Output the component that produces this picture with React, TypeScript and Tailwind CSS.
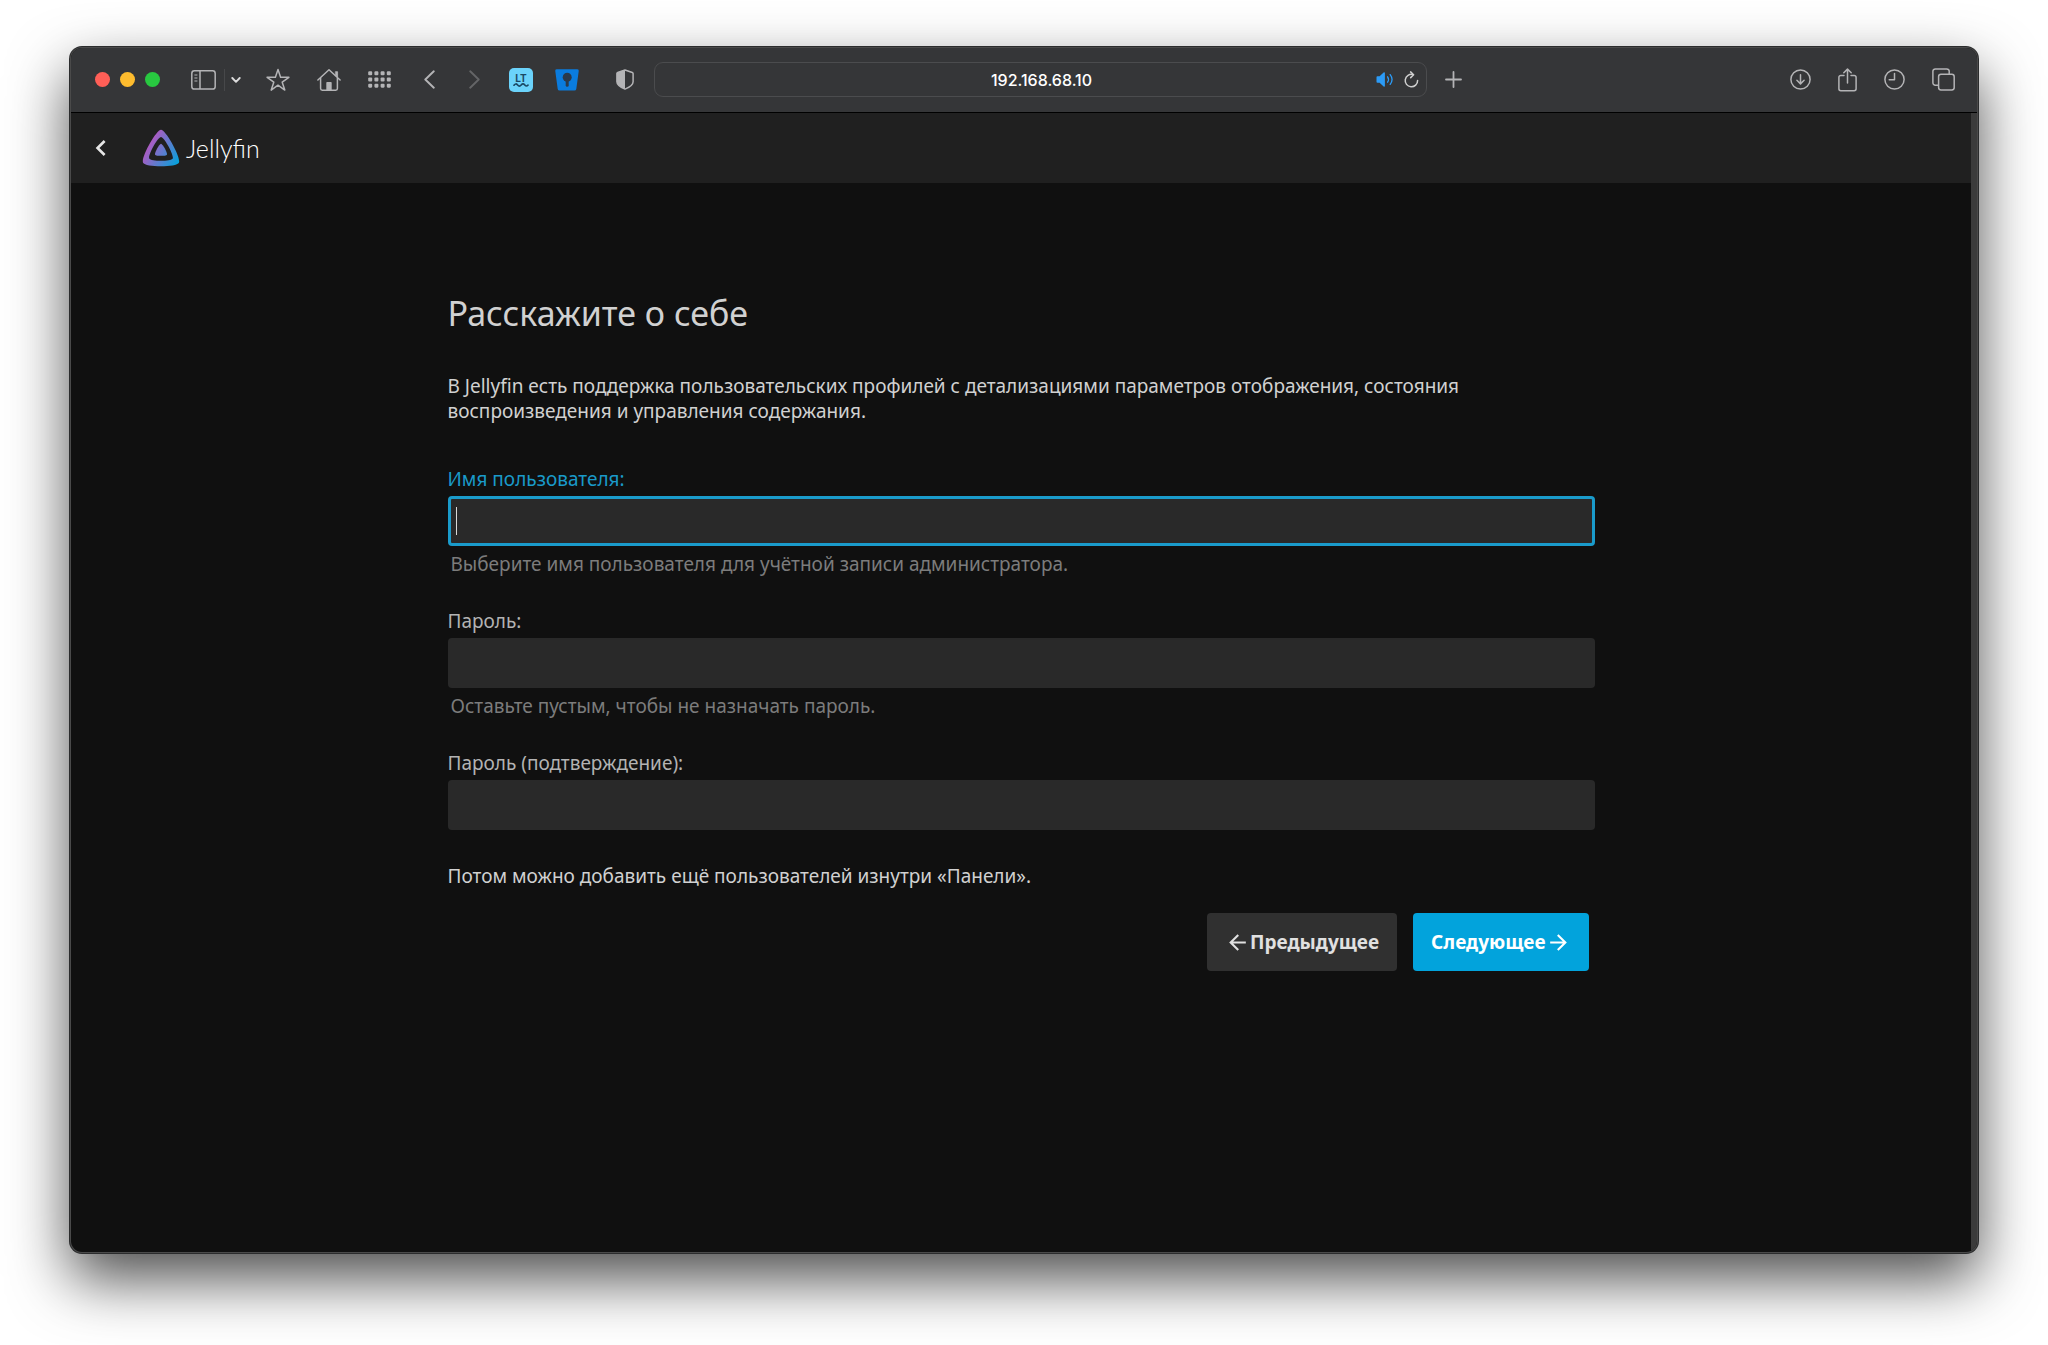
import { useId } from "react"
import { MdArrowBack, MdArrowForward, MdChevronLeft } from "react-icons/md"

const gridRows = [0, 1, 2]
const gridCols = [0, 1, 2, 3]

function BrowserToolbar() {
    return (
        <div className="flex h-[65px] items-center border-b border-black bg-[#353638] pr-[22px] pb-px pl-6 text-[#b4b4b6]">
            <div className="flex gap-[10px]">
                <button type="button" aria-label="Закрыть" className="size-[15px] rounded-full bg-[#ff5f57]" />
                <button type="button" aria-label="Свернуть" className="size-[15px] rounded-full bg-[#febc2e]" />
                <button type="button" aria-label="Развернуть" className="size-[15px] rounded-full bg-[#28c840]" />
            </div>

            <div className="ml-[31px] flex items-center">
                <button type="button" aria-label="Боковая панель">
                    <svg width="25" height="20" viewBox="0 0 25 20" fill="none" stroke="currentColor" strokeWidth="1.5">
                        <rect x="0.8" y="0.8" width="23.4" height="18.2" rx="2.6" />
                        <path d="M9 1v18" />
                        <path d="M3.4 5h3M3.4 8h3M3.4 11h3" strokeWidth="1.2" />
                    </svg>
                </button>
                <span className="ml-2 h-[22px] w-px bg-[#47484a]" />
                <button type="button" aria-label="Группы вкладок" className="ml-[6px] text-[#dcdcdc]">
                    <svg width="10" height="8" viewBox="0 0 10 8" fill="none" stroke="currentColor" strokeWidth="1.9" strokeLinecap="round" strokeLinejoin="round">
                        <path d="M1.3 2L5 5.8 8.7 2" />
                    </svg>
                </button>
            </div>

            <div className="ml-[25px] flex items-center gap-[27px]">
                <button type="button" aria-label="Избранное">
                    <svg width="24" height="24" viewBox="0 0 24 24" fill="none" stroke="currentColor" strokeWidth="1.5" strokeLinejoin="round">
                        <path d="M12 1.400l2.600 7.900h8.300l-6.700 4.900 2.600 7.900-6.800-4.900-6.800 4.900 2.600-7.900L1.100 9.300h8.300z" />
                    </svg>
                </button>
                <button type="button" aria-label="Домой">
                    <svg width="24" height="24" viewBox="0 0 24 24" fill="none" stroke="currentColor" strokeWidth="1.5" strokeLinejoin="round" strokeLinecap="round">
                        <path d="M0.900 12L12 1.700 23.100 12" />
                        <path d="M3.600 10v10.500a1.700 1.700 0 0 0 1.700 1.700h13.400a1.700 1.700 0 0 0 1.700-1.700V10" />
                        <path d="M18.700 3.700h1.900v5.200l-1.900-1.800z" fill="currentColor" strokeWidth="0.800" />
                        <path d="M9.300 22v-7.300a.8.8 0 0 1 .8-.8h3.800a.8.8 0 0 1 .8.8V22z" fill="currentColor" stroke="none" />
                    </svg>
                </button>
                <button type="button" aria-label="Все вкладки">
                    <svg width="23" height="17" viewBox="0 0 23 17" fill="currentColor">
                        {gridRows.map((r) =>
                            gridCols.map((c) => <rect key={`${r}-${c}`} x={c * 6.2 + 0.2} y={r * 6.2 + 0.3} width="4" height="4" rx="1.1" />)
                        )}
                    </svg>
                </button>
            </div>

            <button type="button" aria-label="Назад" className="ml-[33px]">
                <svg width="11" height="19" viewBox="0 0 11 19" fill="none" stroke="currentColor" strokeWidth="1.9" strokeLinecap="round" strokeLinejoin="round">
                    <path d="M9.800 1.300L1.300 9.500l8.500 8.200" />
                </svg>
            </button>
            <button type="button" aria-label="Вперёд" className="ml-[34px] text-[#646567]">
                <svg width="11" height="19" viewBox="0 0 11 19" fill="none" stroke="currentColor" strokeWidth="1.9" strokeLinecap="round" strokeLinejoin="round">
                    <path d="M1.200 1.300l8.500 8.200-8.500 8.200" />
                </svg>
            </button>

            <button type="button" aria-label="LanguageTool" className="ml-[29px]">
                <svg width="24" height="24" viewBox="0 0 24 24">
                    <rect width="24" height="24" rx="5" fill="#6bd3fb" />
                    <text x="12" y="13.5" textAnchor="middle" fontSize="10" fontWeight="700" fontFamily="Inter, sans-serif" fill="#1b4a66">LT</text>
                    <path d="M5 17.200c1.200-1.600 2.400-1.600 3.600-.2s2.400 1.400 3.600 0 2.400-1.400 3.600 0 2.200 1.200 3.200.2" fill="none" stroke="#1b4a66" strokeWidth="1.7" strokeLinecap="round" />
                </svg>
            </button>
            <button type="button" aria-label="Bitwarden" className="ml-[22px]">
                <svg width="24" height="24" viewBox="0 0 24 24">
                    <path d="M2 1.200h20a1.700 1.700 0 0 1 1.700 2l-2.400 17.700a2 2 0 0 1-2 1.700H4.700a2 2 0 0 1-2-1.700L.3 3.200A1.700 1.700 0 0 1 2 1.200z" fill="#0a7cde" />
                    <circle cx="12.2" cy="9.200" r="4.500" fill="#2b3a4a" />
                    <path d="M10.700 10h3v7.200a1.500 1.500 0 0 1-3 0z" fill="#2b3a4a" />
                </svg>
            </button>
            <button type="button" aria-label="Отчёт о конфиденциальности" className="ml-[37px]">
                <svg width="18" height="21" viewBox="0 0 18 21" fill="none" stroke="currentColor" strokeWidth="1.5" strokeLinejoin="round">
                    <path d="M9 1l7.300 2.500c.5.200.8.500.8 1v8.200c0 3-3.900 5.600-8.100 7.400C4.800 18.300.9 15.700.9 12.700V4.500c0-.5.300-.8.800-1z" />
                    <path d="M9 1v19.100C4.800 18.300.9 15.700.9 12.700V4.500c0-.5.300-.8.800-1z" fill="currentColor" stroke="none" />
                </svg>
            </button>

            <div className="ml-5 flex h-[35px] w-full max-w-[773px] min-w-0 items-center rounded-[9px] border border-[#4b4c4e] bg-[#353638] pr-[7px]">
                <input
                    type="text"
                    aria-label="Адрес"
                    defaultValue="192.168.68.10"
                    className="h-full min-w-0 flex-1 bg-transparent pl-[52px] text-center font-['Inter','Liberation_Sans',sans-serif] text-base font-medium text-white outline-none"
                />
                <button type="button" aria-label="Звук" className="text-[#2c9bf6]">
                    <svg width="18" height="17" viewBox="0 0 18 17" fill="none" stroke="currentColor" strokeWidth="1.3" strokeLinecap="round">
                        <path d="M.5 6.200c0-.6.300-.9.900-.9h2.200l4-3.700c.6-.5 1.300-.3 1.300.5v12.800c0 .8-.7 1-1.300.5l-4-3.700H1.400c-.6 0-.9-.3-.9-.9z" fill="currentColor" stroke="none" />
                        <path d="M11.600 5.800c1.100 1.600 1.100 3.800 0 5.400" />
                        <path d="M14.200 3.600c2.200 2.900 2.200 6.900 0 9.800" />
                    </svg>
                </button>
                <button type="button" aria-label="Обновить" className="ml-[10px] text-[#cfcfcf]">
                    <svg width="15" height="17" viewBox="0 0 15 17" fill="none" stroke="currentColor" strokeWidth="1.5" strokeLinecap="round" strokeLinejoin="round">
                        <path d="M13.600 9.500A6.200 6.200 0 1 1 9 3.600" />
                        <path d="M6.600.9l3 2.800-2.900 2.900" />
                    </svg>
                </button>
            </div>

            <button type="button" aria-label="Новая вкладка" className="ml-[18px]">
                <svg width="17" height="17" viewBox="0 0 17 17" fill="none" stroke="currentColor" strokeWidth="1.8" strokeLinecap="round">
                    <path d="M8.500 1v15M1 8.500h15" />
                </svg>
            </button>

            <div className="ml-auto flex items-center gap-[27px]">
                <button type="button" aria-label="Загрузки">
                    <svg width="21" height="21" viewBox="0 0 21 21" fill="none" stroke="currentColor" strokeWidth="1.5" strokeLinecap="round" strokeLinejoin="round">
                        <circle cx="10.5" cy="10.5" r="9.6" />
                        <path d="M10.500 5.700v9M6.900 11.300l3.600 3.600 3.600-3.600" />
                    </svg>
                </button>
                <button type="button" aria-label="Поделиться">
                    <svg width="19" height="24" viewBox="0 0 19 24" fill="none" stroke="currentColor" strokeWidth="1.5" strokeLinecap="round" strokeLinejoin="round">
                        <path d="M6 7.500H2.800A1.900 1.900 0 0 0 .9 9.400v11.400a1.900 1.900 0 0 0 1.900 1.900h13.400a1.900 1.900 0 0 0 1.900-1.900V9.400a1.900 1.900 0 0 0-1.900-1.900H13" />
                        <path d="M9.500 15V1.200M5.800 4.700l3.700-3.600 3.700 3.600" />
                    </svg>
                </button>
                <button type="button" aria-label="История">
                    <svg width="21" height="21" viewBox="0 0 21 21" fill="none" stroke="currentColor" strokeWidth="1.5" strokeLinecap="round" strokeLinejoin="round">
                        <circle cx="10.5" cy="10.5" r="9.6" />
                        <path d="M10.500 4.600v6.200H5.200" />
                    </svg>
                </button>
                <button type="button" aria-label="Обзор вкладок">
                    <svg width="23" height="23" viewBox="0 0 23 23" fill="none" stroke="currentColor" strokeWidth="1.5" strokeLinejoin="round">
                        <rect x="6.6" y="6.3" width="15.6" height="15.6" rx="2.4" />
                        <path d="M6.500 17.200H3.300A2.400 2.400 0 0 1 .9 14.800V3.300A2.400 2.400 0 0 1 3.300.9h11.500a2.400 2.400 0 0 1 2.400 2.400v3" />
                    </svg>
                </button>
            </div>
        </div>
    )
}

function Logo() {
    return (
        <a href="#" className="ml-6 flex items-center gap-[5px]">
            <svg width="40" height="40" viewBox="0 0 512 512">
                <defs>
                    <linearGradient id="jf" gradientUnits="userSpaceOnUse" x1="110.25" y1="213.3" x2="496.14" y2="436.09">
                        <stop offset="0" stopColor="#aa5cc3" />
                        <stop offset="1" stopColor="#00a4dc" />
                    </linearGradient>
                </defs>
                <path fill="url(#jf)" d="M256 201.600c-20.400 0-86.200 119.300-76.200 139.400s142.500 19.900 152.400 0-55.700-139.400-76.200-139.400z" />
                <path fill="url(#jf)" d="M256 23.300c-61.600 0-259.800 359.400-229.600 420.100s429.300 60 459.200 0S317.600 23.300 256 23.300zm150.500 367.500c-19.600 39.300-281.100 39.800-300.900 0S215.700 115.600 256 115.600s170.100 235.900 150.500 275.200z" />
            </svg>
            <span className="font-['Lato',sans-serif] text-[25px] font-light text-white">Jellyfin</span>
        </a>
    )
}

type FieldProps = {
    label: string
    type: string
    hint?: string
    focused?: boolean
}

function Field({ label, type, hint, focused }: FieldProps) {
    const id = useId()
    return (
        <div className="mb-8">
            <label htmlFor={id} className={focused ? "block text-[#1a9ac9]" : "block text-[#b3b3b3]"}>{label}</label>
            <div className="relative mt-1">
                <input
                    id={id}
                    type={type}
                    className={
                        focused
                            ? "block h-[50px] w-full rounded-[4px] border-[3px] border-[#1a9bcb] bg-[#292929] px-2 caret-transparent outline-none"
                            : "block h-[50px] w-full rounded-[4px] bg-[#292929] px-2 outline-none"
                    }
                />
                {focused && <span className="absolute top-[11px] left-2 h-7 w-px bg-[#d8d8d8]" />}
            </div>
            {hint && <p className="mt-[6px] pl-[3px] text-[#7c7c7c]">{hint}</p>}
        </div>
    )
}

function App() {
    return (
        <div className="flex min-h-screen bg-white px-[70px] pt-[47px] pb-[92px]">
            <div className="flex flex-1 flex-col rounded-xl bg-[#4a4a4a] p-px shadow-[0_0_0_1px_#2b2c2d,0_26px_60px_rgba(0,0,0,0.7)]">
                <div className="flex flex-1 flex-col overflow-hidden rounded-[11px] bg-[#101010] font-['Noto_Sans',sans-serif] text-[19px] leading-[25px] text-[#d1d1d1]">
                    <BrowserToolbar />
                    <div className="flex flex-1 border-r-[6px] border-[#3b3b3b]">
                        <div className="flex-1">
                            <header className="flex h-[70px] items-center bg-[#202020] pl-[14px]">
                                <button type="button" aria-label="Назад" className="text-[#e6e6e6]">
                                    <MdChevronLeft size={32} />
                                </button>
                                <Logo />
                            </header>

                            <main className="mx-auto w-full max-w-[1147px] pt-[108px]">
                                <h1 className="text-[34px] leading-[45px]">Расскажите о себе</h1>
                                <p className="mt-[38px] mb-[43px]">
                                    В Jellyfin есть поддержка пользовательских профилей с детализациями параметров отображения, состояния воспроизведения и управления содержания.
                                </p>
                                <form>
                                    <Field label="Имя пользователя:" type="text" hint="Выберите имя пользователя для учётной записи администратора." focused />
                                    <Field label="Пароль:" type="password" hint="Оставьте пустым, чтобы не назначать пароль." />
                                    <Field label="Пароль (подтверждение):" type="password" />
                                    <p className="mt-[34px]">Потом можно добавить ещё пользователей изнутри «Панели».</p>
                                    <div className="mt-6 flex justify-end gap-4 pr-[6px] font-bold">
                                        <button type="button" className="flex h-[58px] items-center rounded-[4px] bg-[#303030] px-[18px] text-[#e0e0e0]">
                                            <MdArrowBack size={25} />
                                            Предыдущее
                                        </button>
                                        <button type="submit" className="flex h-[58px] items-center rounded-[4px] bg-[#02a3dc] px-[18px] text-white">
                                            Следующее
                                            <MdArrowForward size={25} />
                                        </button>
                                    </div>
                                </form>
                            </main>
                        </div>
                    </div>
                </div>
            </div>
        </div>
    )
}

export default App
